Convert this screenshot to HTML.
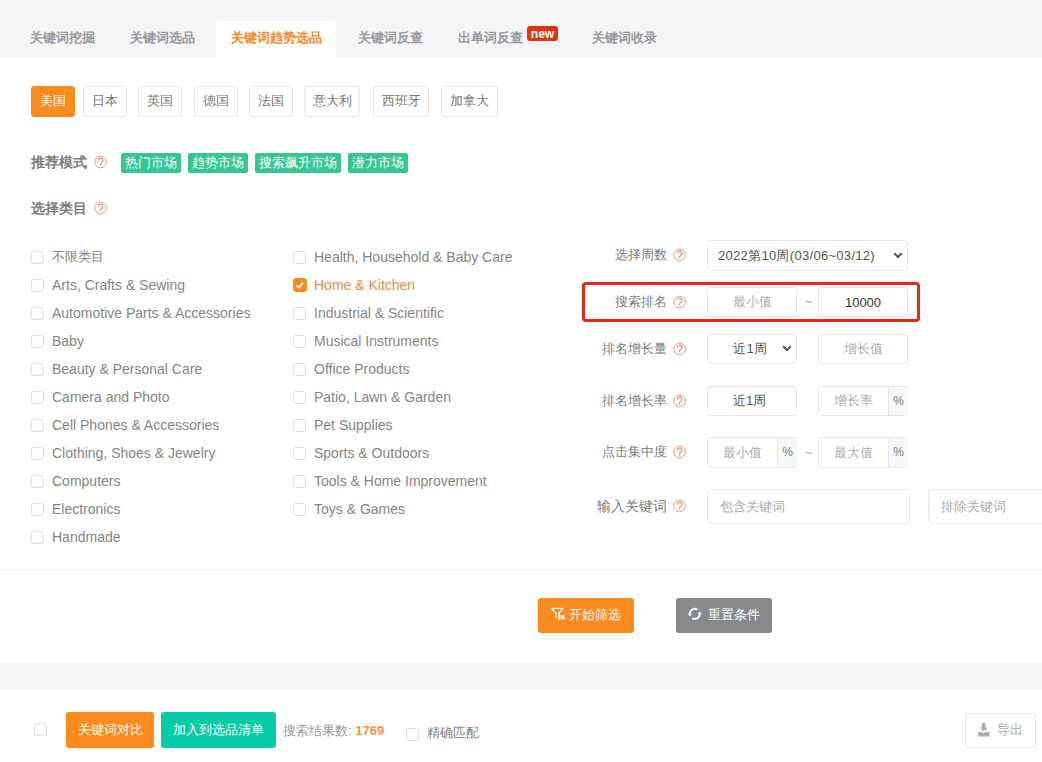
<!DOCTYPE html>
<html><head><meta charset="utf-8">
<style>
*{box-sizing:border-box;margin:0;padding:0}
html,body{width:1042px;height:762px;overflow:hidden;background:#fff}
body{font-family:"Liberation Sans",sans-serif;font-size:13px;color:#666;position:relative}
.a{position:absolute;white-space:nowrap}
.tabbar{left:0;top:0;width:1042px;height:57px;background:#f5f5f7}
.tab{top:29px;font-size:13px;font-weight:bold;color:#97999f;line-height:17px}
.tabact{left:216px;top:21px;width:120px;height:37px;background:#fff;border-radius:3px 3px 0 0}
.new{left:527px;top:26px;width:31px;height:15px;background:#e5330f;border-radius:3px;color:#fff;font-size:12px;font-weight:bold;line-height:16px;text-align:center}
.cbtn{top:86px;height:31px;border:1px solid #e6e6e6;border-radius:3px;font-size:13px;line-height:27px;text-align:center;color:#777}
.cbtn.on{background:#fa8b1e;border-color:#fa8b1e;color:#fff}
.lbl{font-size:14px;font-weight:bold;color:#7c7c7c;line-height:17px}
.q{width:13px;height:13px;border:1px solid #f0a27a;border-radius:50%;color:#f0a27a;font-size:9px;line-height:11px;text-align:center;font-weight:normal}
.tag{top:153px;height:20px;background:#36c692;color:#fff;font-size:13px;line-height:20px;padding:0 4px;border-radius:2px}
.cb{width:13px;height:13px;border:1px solid #dedede;border-radius:3px;background:#fff}
.cb.on{background:#fa8b1e;border-color:#fa8b1e}
.it{font-size:14px;color:#858585;line-height:16px}
.flbl{font-size:13px;color:#7a7a7a;line-height:16px;text-align:right}
.inp{border:1px solid #e6e6e6;border-radius:3px;background:#fff;font-size:13px;text-align:center;color:#aaa}
.addon{background:#f6f7f9;border-left:1px solid #e8e8e8;color:#777;font-size:12px;text-align:center}
</style></head><body>
<div class="a tabbar"></div>
<div class="a tabact"></div>
<div class="a tab" style="left:30px">关键词挖掘</div>
<div class="a tab" style="left:130px">关键词选品</div>
<div class="a tab" style="left:231px;color:#f48a2a">关键词趋势选品</div>
<div class="a tab" style="left:358px">关键词反查</div>
<div class="a tab" style="left:458px">出单词反查</div>
<div class="a new">new</div>
<div class="a tab" style="left:592px">关键词收录</div>

<div class="a cbtn on" style="left:31px;width:44px">美国</div>
<div class="a cbtn" style="left:83px;width:44px">日本</div>
<div class="a cbtn" style="left:138px;width:44px">英国</div>
<div class="a cbtn" style="left:194px;width:44px">德国</div>
<div class="a cbtn" style="left:249px;width:44px">法国</div>
<div class="a cbtn" style="left:304px;width:56px">意大利</div>
<div class="a cbtn" style="left:373px;width:56px">西班牙</div>
<div class="a cbtn" style="left:441px;width:57px">加拿大</div>

<div class="a lbl" style="left:31px;top:154px">推荐模式</div>
<svg class="a" style="left:94px;top:155px" width="14" height="14"><circle cx="6.6" cy="7" r="5.8" stroke="#e89a78" stroke-width="1" fill="none"/><path d="M4.3 5.4 A2.3 2.3 0 1 1 8.4 6.8 Q6.6 7.6 6.6 9.2 V10.6" stroke="#e4906c" stroke-width="1.2" fill="none"/></svg>
<div class="a tag" style="left:121px">热门市场</div>
<div class="a tag" style="left:188px">趋势市场</div>
<div class="a tag" style="left:255px">搜索飙升市场</div>
<div class="a tag" style="left:348px">潜力市场</div>

<div class="a lbl" style="left:31px;top:200px">选择类目</div>
<svg class="a" style="left:94px;top:201px" width="14" height="14"><circle cx="6.6" cy="7" r="5.8" stroke="#e89a78" stroke-width="1" fill="none"/><path d="M4.3 5.4 A2.3 2.3 0 1 1 8.4 6.8 Q6.6 7.6 6.6 9.2 V10.6" stroke="#e4906c" stroke-width="1.2" fill="none"/></svg>

<!-- categories -->
<div class="a cb" style="left:31px;top:251px"></div><div class="a it" style="left:52px;top:249px;font-size:13px">不限类目</div>
<div class="a cb" style="left:31px;top:279px"></div><div class="a it" style="left:52px;top:277px">Arts, Crafts &amp; Sewing</div>
<div class="a cb" style="left:31px;top:307px"></div><div class="a it" style="left:52px;top:305px">Automotive Parts &amp; Accessories</div>
<div class="a cb" style="left:31px;top:335px"></div><div class="a it" style="left:52px;top:333px">Baby</div>
<div class="a cb" style="left:31px;top:363px"></div><div class="a it" style="left:52px;top:361px">Beauty &amp; Personal Care</div>
<div class="a cb" style="left:31px;top:391px"></div><div class="a it" style="left:52px;top:389px">Camera and Photo</div>
<div class="a cb" style="left:31px;top:419px"></div><div class="a it" style="left:52px;top:417px">Cell Phones &amp; Accessories</div>
<div class="a cb" style="left:31px;top:447px"></div><div class="a it" style="left:52px;top:445px">Clothing, Shoes &amp; Jewelry</div>
<div class="a cb" style="left:31px;top:475px"></div><div class="a it" style="left:52px;top:473px">Computers</div>
<div class="a cb" style="left:31px;top:503px"></div><div class="a it" style="left:52px;top:501px">Electronics</div>
<div class="a cb" style="left:31px;top:531px"></div><div class="a it" style="left:52px;top:529px">Handmade</div>
<div class="a cb" style="left:293px;top:251px"></div><div class="a it" style="left:314px;top:249px">Health, Household &amp; Baby Care</div>
<div class="a cb on" style="left:293px;top:278px;width:14px;height:14px;border-radius:3px"><svg width="14" height="14" style="position:absolute;left:-1px;top:-1px"><path d="M3.8 7.6 L6 9.6 L9.4 5.3" stroke="#fff" stroke-width="1.8" fill="none" stroke-linecap="round" stroke-linejoin="round"/></svg></div><div class="a it" style="left:314px;top:277px;color:#f08c3c">Home &amp; Kitchen</div>
<div class="a cb" style="left:293px;top:307px"></div><div class="a it" style="left:314px;top:305px">Industrial &amp; Scientific</div>
<div class="a cb" style="left:293px;top:335px"></div><div class="a it" style="left:314px;top:333px">Musical Instruments</div>
<div class="a cb" style="left:293px;top:363px"></div><div class="a it" style="left:314px;top:361px">Office Products</div>
<div class="a cb" style="left:293px;top:391px"></div><div class="a it" style="left:314px;top:389px">Patio, Lawn &amp; Garden</div>
<div class="a cb" style="left:293px;top:419px"></div><div class="a it" style="left:314px;top:417px">Pet Supplies</div>
<div class="a cb" style="left:293px;top:447px"></div><div class="a it" style="left:314px;top:445px">Sports &amp; Outdoors</div>
<div class="a cb" style="left:293px;top:475px"></div><div class="a it" style="left:314px;top:473px">Tools &amp; Home Improvement</div>
<div class="a cb" style="left:293px;top:503px"></div><div class="a it" style="left:314px;top:501px">Toys &amp; Games</div>

<!-- form -->
<div class="a flbl" style="left:560px;width:107px;top:247px">选择周数</div>
<svg class="a" style="left:673px;top:248px" width="14" height="14"><circle cx="6.6" cy="7" r="5.8" stroke="#e89a78" stroke-width="1" fill="none"/><path d="M4.3 5.4 A2.3 2.3 0 1 1 8.4 6.8 Q6.6 7.6 6.6 9.2 V10.6" stroke="#e4906c" stroke-width="1.2" fill="none"/></svg>
<div class="a inp" style="left:707px;top:240px;width:201px;height:31px"></div>
<div class="a" style="left:718px;top:248px;font-size:13px;color:#555;line-height:16px;letter-spacing:0.3px">2022第10周(03/06~03/12)</div><svg class="a" style="left:893px;top:252px" width="10" height="7"><path d="M1.2 1.2 L5 5 L8.8 1.2" stroke="#555" stroke-width="2" fill="none"/></svg>

<div class="a" style="left:582px;top:282px;width:338px;height:40px;border:3px solid #e02a20;border-radius:4px"></div>
<div class="a flbl" style="left:560px;width:107px;top:294px">搜索排名</div>
<svg class="a" style="left:673px;top:295px" width="14" height="14"><circle cx="6.6" cy="7" r="5.8" stroke="#e89a78" stroke-width="1" fill="none"/><path d="M4.3 5.4 A2.3 2.3 0 1 1 8.4 6.8 Q6.6 7.6 6.6 9.2 V10.6" stroke="#e4906c" stroke-width="1.2" fill="none"/></svg>
<div class="a inp" style="left:707px;top:287px;width:90px;height:30px;line-height:28px">最小值</div>
<div class="a" style="left:805px;top:294px;color:#aaa">~</div>
<div class="a inp" style="left:818px;top:287px;width:90px;height:30px;line-height:30px;color:#333">10000</div>

<div class="a flbl" style="left:560px;width:107px;top:341px">排名增长量</div>
<svg class="a" style="left:673px;top:342px" width="14" height="14"><circle cx="6.6" cy="7" r="5.8" stroke="#e89a78" stroke-width="1" fill="none"/><path d="M4.3 5.4 A2.3 2.3 0 1 1 8.4 6.8 Q6.6 7.6 6.6 9.2 V10.6" stroke="#e4906c" stroke-width="1.2" fill="none"/></svg>
<div class="a inp" style="left:707px;top:334px;width:90px;height:30px;line-height:28px;color:#555;padding-right:4px">近1周</div><svg class="a" style="left:782px;top:345px" width="10" height="7"><path d="M1.2 1.2 L5 5 L8.8 1.2" stroke="#555" stroke-width="2" fill="none"/></svg>
<div class="a inp" style="left:818px;top:334px;width:90px;height:30px;line-height:28px">增长值</div>

<div class="a flbl" style="left:560px;width:107px;top:393px">排名增长率</div>
<svg class="a" style="left:673px;top:394px" width="14" height="14"><circle cx="6.6" cy="7" r="5.8" stroke="#e89a78" stroke-width="1" fill="none"/><path d="M4.3 5.4 A2.3 2.3 0 1 1 8.4 6.8 Q6.6 7.6 6.6 9.2 V10.6" stroke="#e4906c" stroke-width="1.2" fill="none"/></svg>
<div class="a inp" style="left:707px;top:386px;width:90px;height:30px;line-height:28px;color:#555;padding-right:5px">近1周</div>
<div class="a inp" style="left:818px;top:386px;width:90px;height:30px;line-height:28px;padding-right:19px">增长率<div class="a addon" style="left:69px;top:0;width:20px;height:28px;line-height:28px;border-radius:0 2px 2px 0">%</div></div>

<div class="a flbl" style="left:560px;width:107px;top:444px">点击集中度</div>
<svg class="a" style="left:673px;top:445px" width="14" height="14"><circle cx="6.6" cy="7" r="5.8" stroke="#e89a78" stroke-width="1" fill="none"/><path d="M4.3 5.4 A2.3 2.3 0 1 1 8.4 6.8 Q6.6 7.6 6.6 9.2 V10.6" stroke="#e4906c" stroke-width="1.2" fill="none"/></svg>
<div class="a inp" style="left:707px;top:437px;width:90px;height:31px;line-height:29px;padding-right:19px">最小值<div class="a addon" style="left:69px;top:0;width:20px;height:29px;line-height:29px;border-radius:0 2px 2px 0">%</div></div>
<div class="a" style="left:805px;top:445px;color:#aaa">~</div>
<div class="a inp" style="left:818px;top:437px;width:90px;height:31px;line-height:29px;padding-right:19px">最大值<div class="a addon" style="left:69px;top:0;width:20px;height:29px;line-height:29px;border-radius:0 2px 2px 0">%</div></div>

<div class="a flbl" style="left:540px;width:127px;top:498px;font-size:14px">输入关键词</div>
<svg class="a" style="left:673px;top:499px" width="14" height="14"><circle cx="6.6" cy="7" r="5.8" stroke="#e89a78" stroke-width="1" fill="none"/><path d="M4.3 5.4 A2.3 2.3 0 1 1 8.4 6.8 Q6.6 7.6 6.6 9.2 V10.6" stroke="#e4906c" stroke-width="1.2" fill="none"/></svg>
<div class="a inp" style="left:707px;top:489px;width:203px;height:35px;text-align:left;padding-left:12px;line-height:33px">包含关键词</div>
<div class="a inp" style="left:928px;top:489px;width:130px;height:35px;text-align:left;padding-left:12px;line-height:33px">排除关键词</div>

<div class="a" style="left:0;top:569px;width:1042px;height:1px;background:#ececec"></div>
<div class="a" style="left:538px;top:598px;width:96px;height:35px;background:#fa8b1e;border-radius:3px;color:#fff;line-height:33px;padding-left:31px">开始筛选<svg class="a" style="left:12px;top:9px" width="16" height="14"><path d="M1.6 1.4 H13 L9 6 V13 M1.6 1.4 L5.7 6 V11" stroke="#fff" stroke-width="1.4" fill="none" stroke-linejoin="round"/><rect x="10.6" y="8" width="4" height="4.4" fill="#fff"/></svg></div>
<div class="a" style="left:676px;top:598px;width:96px;height:35px;background:#86898d;border-radius:3px;color:#fff;line-height:33px;padding-left:32px">重置条件<svg class="a" style="left:11px;top:9px" width="18" height="16"><path d="M10.3 2.47 A5 5 0 0 0 2.8 6.8" stroke="#fff" stroke-width="1.8" fill="none"/><path d="M5.3 11.13 A5 5 0 0 0 12.8 6.8" stroke="#fff" stroke-width="1.8" fill="none"/><path d="M0.7 6.5 H4.9 L2.8 9.4 Z" fill="#fff"/><path d="M10.7 7.1 H14.9 L12.8 4.2 Z" fill="#fff"/></svg></div>

<div class="a" style="left:0;top:662px;width:1042px;height:27px;background:#f5f5f7"></div>

<div class="a cb" style="left:34px;top:723px"></div>
<div class="a" style="left:66px;top:712px;width:88px;height:36px;background:#fa8b1e;border-radius:3px;color:#fff;line-height:36px;text-align:center">关键词对比</div>
<div class="a" style="left:161px;top:712px;width:115px;height:36px;background:#04cba6;border-radius:3px;color:#fff;line-height:36px;text-align:center">加入到选品清单</div>
<div class="a" style="left:283px;top:723px;color:#999;line-height:16px">搜索结果数: <b style="color:#f39148">1769</b></div>
<div class="a cb" style="left:406px;top:728px"></div>
<div class="a" style="left:427px;top:725px;color:#808080;font-size:13px;line-height:16px">精确匹配</div>
<div class="a" style="left:965px;top:713px;width:71px;height:35px;border:1px solid #e6e6e6;border-radius:3px;color:#aaa;line-height:32px;padding-left:31px">导出<svg class="a" style="left:11px;top:8px" width="16" height="16"><path d="M5 1 H8.5 V5.5 H10.8 L6.75 9.5 L2.7 5.5 H5 Z" fill="#ababab"/><path d="M1.2 10 H5.2 L6.75 11.6 L8.3 10 H12.6 V14.6 H1.2 Z" fill="#ababab"/></svg></div>
</body></html>
